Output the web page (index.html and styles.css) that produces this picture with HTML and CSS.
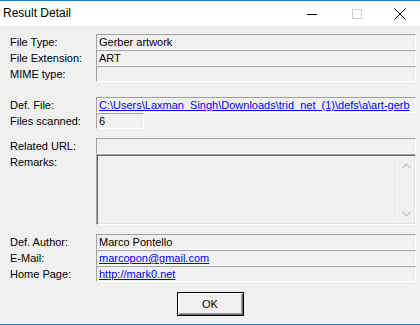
FILE: index.html
```html
<!DOCTYPE html>
<html lang="en">
<head>
  <meta charset="UTF-8" />
  <title>Result Detail</title>
  <link rel="stylesheet" href="styles.css">
</head>
<body>

<div class="window">
  <div class="titlebar">
    <span class="title">Result Detail</span>
    <div class="caption">
      <span class="cap-btn">
        <svg width="10" height="10" viewBox="0 0 10 10"><path d="M0 5.5h10" stroke="#000" stroke-width="1"/></svg>
      </span>
      <span class="cap-btn">
        <svg width="10" height="10" viewBox="0 0 10 10"><rect x="0.5" y="0.5" width="9" height="9" fill="none" stroke="#ccc" stroke-width="1"/></svg>
      </span>
      <span class="cap-btn close">
        <svg width="12" height="12" viewBox="0 0 12 12"><path d="M0.5 0.5l11 11M11.5 0.5l-11 11" stroke="#000" stroke-width="1"/></svg>
      </span>
    </div>
  </div>

  <div class="content">
    <div class="fields">
      <span class="label">File Type:</span>
      <div class="box">Gerber artwork</div>
      <span class="label">File Extension:</span>
      <div class="box">ART</div>
      <span class="label">MIME type:</span>
      <div class="box"></div>
    </div>

    <div class="fields group-wide">
      <span class="label">Def. File:</span>
      <div class="box"><a href="#">C:\Users\Laxman_Singh\Downloads\trid_net_(1)\defs\a\art-gerb</a></div>
      <span class="label">Files scanned:</span>
      <div class="box short">6</div>
    </div>

    <div class="fields group">
      <span class="label">Related URL:</span>
      <div class="box"></div>
      <span class="label">Remarks:</span>
      <div class="remarks">
        <div class="scrollbar">
          <svg width="9" height="6" viewBox="0 0 9 6"><path d="M0.5 5l4-4 4 4" fill="none" stroke="#c0c0c0" stroke-width="1.2"/></svg>
          <svg width="9" height="6" viewBox="0 0 9 6"><path d="M0.5 1l4 4 4-4" fill="none" stroke="#c0c0c0" stroke-width="1.2"/></svg>
        </div>
      </div>
    </div>

    <div class="fields group">
      <span class="label">Def. Author:</span>
      <div class="box">Marco Pontello</div>
      <span class="label">E-Mail:</span>
      <div class="box"><a href="#">marcopon@gmail.com</a></div>
      <span class="label">Home Page:</span>
      <div class="box"><a href="#">http://mark0.net</a></div>
    </div>
  </div>

  <div class="actions">
    <button type="button">OK</button>
  </div>
</div>

</body>
</html>
```

FILE: styles.css
```css
body {
  margin: 0;
  background: #f0f0f0;
  font-family: "Liberation Sans", Arial, sans-serif;
  font-size: 11px;
  color: #000;
}
.window {
  height: 325px;
  box-sizing: border-box;
  border-top: 1px solid #1883d7;
  border-bottom: 1px solid #1883d7;
  display: flex;
  flex-direction: column;
}
.titlebar {
  height: 25px;
  background: #fff;
  display: flex;
  align-items: center;
}
.title {
  flex: 1;
  font-size: 12px;
  padding-left: 3px;
  padding-bottom: 1px;
}
.caption {
  display: flex;
  height: 100%;
}
.cap-btn {
  width: 45px;
  display: flex;
  align-items: center;
  justify-content: center;
}
.cap-btn.close {
  width: 41px;
}
.content {
  padding: 8px 4px 0 10px;
}
.fields {
  display: grid;
  grid-template-columns: 86px 1fr;
}
.group-wide {
  margin-top: 15px;
}
.group {
  margin-top: 9px;
}
.label {
  line-height: 16px;
  white-space: nowrap;
}
.box {
  height: 16px;
  box-sizing: border-box;
  border: 1px solid;
  border-color: #a0a0a0 #fff #fff #a0a0a0;
  padding-left: 2px;
  line-height: 14px;
  white-space: nowrap;
  overflow: hidden;
}
.box.short {
  width: 48px;
}
.box a {
  color: #0000ff;
  text-decoration: underline;
}
.remarks {
  height: 71px;
  box-sizing: border-box;
  border: 1px solid;
  border-color: #a0a0a0 #fff #fff #a0a0a0;
  box-shadow: inset 1px 1px #696969, inset -1px -1px #e3e3e3;
  display: flex;
  justify-content: flex-end;
}
.scrollbar {
  width: 16px;
  margin: 1px 1px 1px 0;
  border-left: 1px solid #f8f8f8;
  background: #f0f0f0;
  display: flex;
  flex-direction: column;
  justify-content: space-between;
  align-items: center;
  padding: 7px 0 6px;
}
.actions {
  display: flex;
  justify-content: center;
  margin-top: 10px;
}
.actions button {
  width: 67px;
  height: 24px;
  padding: 0;
  border: 1px solid #000;
  background: #f0f0f0;
  box-shadow: inset 1px 1px #fff, inset -1px -1px #696969, inset -2px -2px #a0a0a0;
  font-family: "Liberation Sans", Arial, sans-serif;
  font-size: 11px;
  font-weight: normal;
  color: #000;
}
```
